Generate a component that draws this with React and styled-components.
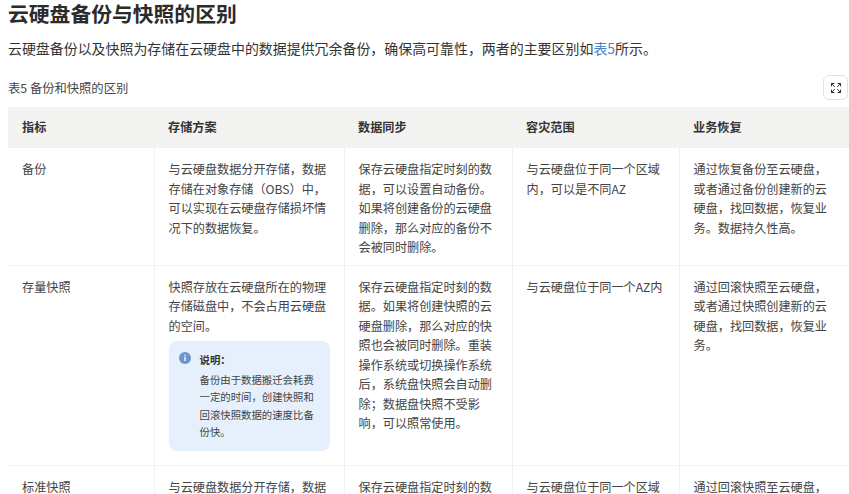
import React from 'react';
import styled, { createGlobalStyle } from 'styled-components';
import { Expand } from 'lucide-react';

const GlobalStyle = createGlobalStyle`
  html, body {
    margin: 0;
    padding: 0;
    height: 494px;
    overflow: hidden;
    background: #fff;
  }
  body {
    font-family: "Noto Sans CJK SC", "Liberation Sans", sans-serif;
    color: #333;
  }
`;

const Page = styled.div`
  height: 494px;
  overflow: hidden;
  padding-left: 8px;
`;

const Title = styled.h2`
  margin: 0;
  height: 26px;
  font-size: 20.8px;
  line-height: 26px;
  font-weight: 700;
  color: #2b2b2b;
`;

const Intro = styled.p`
  margin: 10px 0 0;
  font-size: 13.95px;
  line-height: 24px;
  color: #333;
`;

const Link = styled.a`
  color: #4a86c5;
`;

const CaptionRow = styled.div`
  display: flex;
  align-items: center;
  justify-content: space-between;
  margin-top: 15px;
  height: 25px;
  padding-right: 1px;
`;

const Caption = styled.span`
  font-size: 12.3px;
  color: #444;
`;

const ExpandButton = styled.button`
  display: flex;
  align-items: center;
  justify-content: center;
  width: 25px;
  height: 25px;
  padding: 0;
  background: #fff;
  border: 1px solid #e2e2e2;
  border-radius: 6px;
  color: #333;
`;

const Table = styled.table`
  margin-top: 7px;
  width: 841px;
  table-layout: fixed;
  border-collapse: collapse;
`;

const HeadCell = styled.th`
  height: 40px;
  padding: 0 14px;
  background: #f3f3f2;
  text-align: left;
  font-size: 12.13px;
  line-height: 19.5px;
  font-weight: 700;
  color: #333;
`;

const Cell = styled.td`
  padding: 11px 14px 8px;
  vertical-align: top;
  font-size: 12.13px;
  line-height: 19.5px;
  color: #444;
  border-top: 1px solid #f2f2f2;
  border-left: 1px solid #f2f2f2;
  &:first-child {
    border-left: none;
  }
`;

const Note = styled.div`
  display: flex;
  gap: 9px;
  margin: 6px 0 6px;
  padding: 10px;
  width: 161px;
  box-sizing: border-box;
  background: #e6f0fd;
  border-radius: 8px;
`;

const NoteIcon = styled.svg`
  flex: none;
  width: 12px;
  height: 12px;
  margin-top: 1px;
`;

const NoteBody = styled.div`
  font-size: 10.4px;
  line-height: 17.6px;
  color: #444;
`;

const NoteTitle = styled.div`
  font-weight: 700;
  color: #333;
  margin-bottom: 2px;
`;

const columns = [146, 190, 168, 167, 170];
const headers = ['指标', '存储方案', '数据同步', '容灾范围', '业务恢复'];

const App = () => {
	return (
		<Page>
			<GlobalStyle />
			<Title>云硬盘备份与快照的区别</Title>
			<Intro>
				云硬盘备份以及快照为存储在云硬盘中的数据提供冗余备份，确保高可靠性，两者的主要区别如<Link>表5</Link>所示。
			</Intro>
			<CaptionRow>
				<Caption>表5 备份和快照的区别</Caption>
				<ExpandButton>
					<Expand size={12} strokeWidth={2} />
				</ExpandButton>
			</CaptionRow>
			<Table>
				<colgroup>
					{columns.map((width, i) => (
						<col key={i} width={width} />
					))}
				</colgroup>
				<thead>
					<tr>
						{headers.map((header) => (
							<HeadCell key={header}>{header}</HeadCell>
						))}
					</tr>
				</thead>
				<tbody>
					<tr>
						<Cell>备份</Cell>
						<Cell>与云硬盘数据分开存储，数据存储在对象存储（OBS）中，可以实现在云硬盘存储损坏情况下的数据恢复。</Cell>
						<Cell>保存云硬盘指定时刻的数据，可以设置自动备份。如果将创建备份的云硬盘删除，那么对应的备份不会被同时删除。</Cell>
						<Cell>与云硬盘位于同一个区域内，可以是不同AZ</Cell>
						<Cell>通过恢复备份至云硬盘，或者通过备份创建新的云硬盘，找回数据，恢复业务。数据持久性高。</Cell>
					</tr>
					<tr>
						<Cell>存量快照</Cell>
						<Cell>
							快照存放在云硬盘所在的物理存储磁盘中，不会占用云硬盘的空间。
							<Note>
								<NoteIcon viewBox="0 0 12 12">
									<circle cx="6" cy="6" r="6" fill="#6b95c6" />
									<rect x="5.3" y="5" width="1.4" height="4" fill="#fff" />
									<rect x="5.3" y="2.8" width="1.4" height="1.4" fill="#fff" />
								</NoteIcon>
								<NoteBody>
									<NoteTitle>说明：</NoteTitle>
									备份由于数据搬迁会耗费一定的时间，创建快照和回滚快照数据的速度比备份快。
								</NoteBody>
							</Note>
						</Cell>
						<Cell>保存云硬盘指定时刻的数据。如果将创建快照的云硬盘删除，那么对应的快照也会被同时删除。重装操作系统或切换操作系统后，系统盘快照会自动删除；数据盘快照不受影响，可以照常使用。</Cell>
						<Cell>与云硬盘位于同一个AZ内</Cell>
						<Cell>通过回滚快照至云硬盘，或者通过快照创建新的云硬盘，找回数据，恢复业务。</Cell>
					</tr>
					<tr>
						<Cell>标准快照</Cell>
						<Cell>与云硬盘数据分开存储，数据存储在对象存储（OBS）中。</Cell>
						<Cell>保存云硬盘指定时刻的数据。</Cell>
						<Cell>与云硬盘位于同一个区域内</Cell>
						<Cell>通过回滚快照至云硬盘，或者通过快照创建新的云硬盘。</Cell>
					</tr>
				</tbody>
			</Table>
		</Page>
	);
};

export default App;
